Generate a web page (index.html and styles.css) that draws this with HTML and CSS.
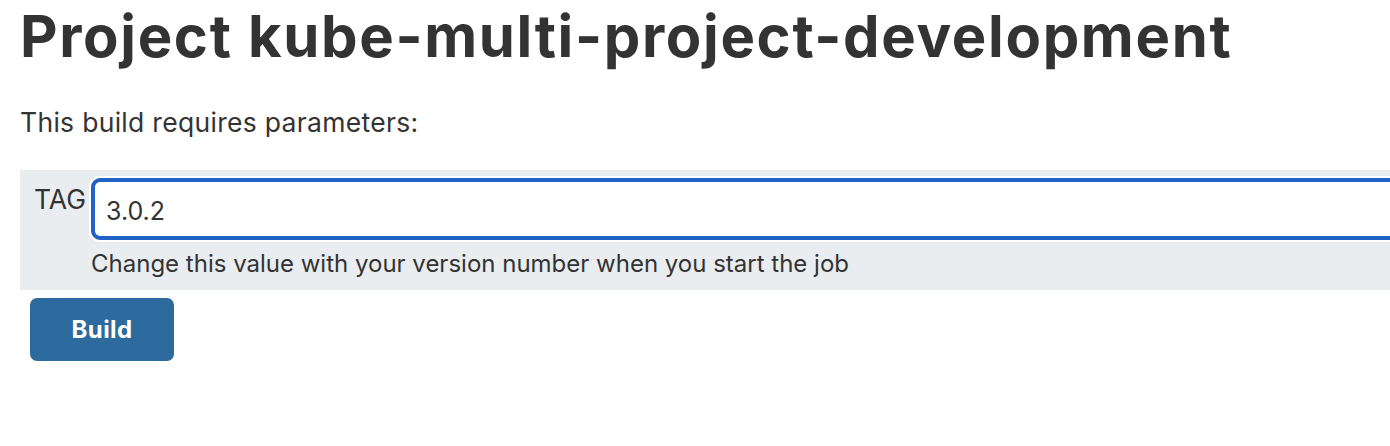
FILE: index.html
```html
<!DOCTYPE html>
<html>
<head>
<meta charset="utf-8">
<link rel="stylesheet" href="styles.css">
</head>
<body>
<div class="page">
  <h1 class="title">Project kube-multi-project-development</h1>
  <p class="intro">This build requires parameters:</p>
  <div class="params">
    <div class="param-row">
      <label class="param-name" for="tag">TAG</label>
      <div class="param-field">
        <input id="tag" class="param-input" type="text" value="3.0.2">
        <div class="param-help">Change this value with your version number when you start the job</div>
      </div>
    </div>
  </div>
  <div class="actions">
    <button class="build-btn" type="button">Build</button>
  </div>
</div>
</body>
</html>
```

FILE: styles.css
```css
html, body {
  margin: 0;
  padding: 0;
  background: #ffffff;
}
body {
  font-family: Inter, "Noto Sans", sans-serif;
  color: #333333;
  overflow: hidden;
  width: 1390px;
  height: 446px;
}
.page {
  padding: 0 0 0 20px;
}
.title {
  margin: 0;
  padding-top: 1px;
  font-size: 58px;
  font-weight: 700;
  line-height: 70px;
  letter-spacing: 1.65px;
  color: #333333;
  white-space: nowrap;
}
.intro {
  margin: 35px 0 0 0;
  font-size: 26.5px;
  line-height: 32px;
  letter-spacing: 0.3px;
  color: #333333;
}
.params {
  margin-top: 32px;
  background: #e9edf0;
  padding: 8px 0 11px 14px;
  margin-right: -40px;
}
.param-row {
  display: flex;
  gap: 5px;
}
.param-name {
  font-size: 26.5px;
  line-height: 32px;
  padding-top: 5px;
  color: #333333;
}
.param-field {
  flex: 1;
  display: flex;
  flex-direction: column;
}
.param-input {
  box-sizing: border-box;
  height: 62px;
  width: 100%;
  border: 4px solid #2062c7;
  border-radius: 9px;
  box-shadow: 0 0 0 2px #ffffff;
  background: #ffffff;
  padding: 4px 11px 0 11px;
  margin: 0;
  font-family: Inter, "Noto Sans", sans-serif;
  font-size: 25px;
  color: #333333;
  outline: none;
}
.param-help {
  font-size: 24px;
  line-height: 30px;
  margin-top: 9px;
  color: #333333;
}
.actions {
  padding: 8px 0 0 10px;
}
.build-btn {
  display: block;
  width: 144px;
  height: 63px;
  background: #2d6a9e;
  border: none;
  border-radius: 7px;
  color: #ffffff;
  font-family: Inter, "Noto Sans", sans-serif;
  font-weight: 700;
  font-size: 24px;
  letter-spacing: 0.4px;
  padding: 0;
}
```
